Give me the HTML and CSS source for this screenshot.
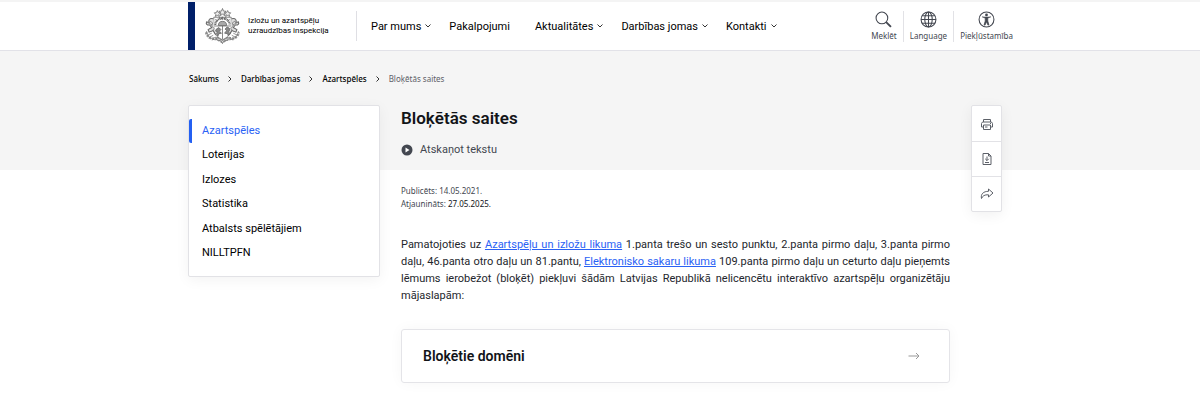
FILE: index.html
```html
<!DOCTYPE html>
<html lang="lv">
<head>
<meta charset="utf-8">
<meta name="viewport" content="width=device-width, initial-scale=1">
<title>Bloķētās saites</title>
<link rel="stylesheet" href="styles.css">
</head>
<body>
<svg class="sprite" aria-hidden="true">
  <symbol id="down" viewBox="0 0 6 6"><path d="M.5 1.5 3 4 5.500 1.500" fill="none" stroke="currentColor"/></symbol>
  <symbol id="right" viewBox="0 0 6 6"><path d="M1.500.5 4 3 1.500 5.500" fill="none" stroke="currentColor"/></symbol>
</svg>
<header class="header">
  <div class="container header-row">
    <a class="logo" href="#">
      <svg class="emblem" viewBox="0 0 68 70" aria-hidden="true" fill="none" stroke="#666" stroke-width="1.500">
        <g fill="#eee">
          <path d="m34 1 2 5 5 .4-4 3.400 1.400 5L34 12l-4.400 2.800 1.400-5-4-3.400 5-.4z"/>
          <path d="m24 5 2 4 4 .4-3 3 1 4-4-2-4 2 1-4-3-3 4-.4zM44 5l2 4 4 .4-3 3 1 4-4-2-4 2 1-4-3-3 4-.4z"/>
        </g>
        <path d="M17 18h34v24c0 10-8 15-17 20-9-5-17-10-17-20z" fill="#fff"/>
        <path d="M17 35h34M34 35v26"/>
        <path d="M20 33a14 13 0 0 1 28 0" stroke-width="4" stroke-dasharray="2 1"/>
        <path d="M26 34a8 8 0 0 1 16 0z" fill="#aaa"/>
        <path d="m20 22 5 4M28 18l2 5m10-5-2 5m10-1-5 4M34 17v6"/>
        <path d="m22 41 5-3 4 4-3 3 4 4-5 1-2 5-3-5 2-4-4-1zM47 39l-4-2-4 4 3 3-4 5 6 1 1 4 4-5-3-4 3-2z" fill="#888"/>
        <path d="M16 21c-7-2-10 2-8 7l-5-1c-2 4 1 7 6 6l4 5-7 4 2 5 8-3 5 8M52 21c7-2 10 2 8 7l5-1c2 4-1 7-6 6l-4 5 7 4-2 5-8-3-5 8" stroke-width="2" fill="#ddd"/>
        <path d="m9 25 6 4-2 6 5 5-5 5m46-20-6 4 2 6-5 5 5 5M6 29l8 4m48-4-8 4" stroke="#777"/>
        <path d="M2 47c2 9 9 14 18 12l14 7 14-7c9 2 16-3 18-12" stroke="#999" stroke-width="5" stroke-dasharray="4 2"/>
        <path d="M3 45c1 10 8 16 18 17m44-17c-1 10-8 16-18 17M5 53l8-4m-6 9 9-5m-2 10 6-7m43-3-8-4m6 9-9-5m2 10-6-7" stroke="#777"/>
        <path d="m23 57 11 6 11-6v5l-8 2-3 5-3-5-8-2z" fill="#ddd"/>
      </svg>
      <span class="logo-text">Izložu un azartspēļu<br>uzraudzības inspekcija</span>
    </a>
    <nav class="nav" aria-label="Galvenā izvēlne">
      <a href="#">Par mums<svg class="chevron"><use href="#down"/></svg></a>
      <a class="plain" href="#">Pakalpojumi</a>
      <a href="#">Aktualitātes<svg class="chevron"><use href="#down"/></svg></a>
      <a href="#">Darbības jomas<svg class="chevron"><use href="#down"/></svg></a>
      <a href="#">Kontakti<svg class="chevron"><use href="#down"/></svg></a>
    </nav>
    <div class="actions">
      <button type="button"><svg viewBox="0 0 16 16"><circle cx="6.500" cy="6.500" r="5.500"/><path d="m10.500 10.500 4.500 4.500" stroke-width="1.800"/></svg>Meklēt</button>
      <button type="button"><svg viewBox="0 0 16 16"><circle cx="8" cy="8" r="7"/><ellipse cx="8" cy="8" rx="3.500" ry="7"/><path d="M8 1v14M1 8h14M2 4.500h12M2 11.500h12"/></svg>Language</button>
      <button type="button"><svg viewBox="0 0 16 16"><circle cx="8" cy="8" r="7"/><circle cx="8" cy="3.700" r="1.300" fill="currentColor" stroke="none"/><path d="M3.800 5.500 6.800 6.500v3L5.700 13l.9.3L8 10l1.400 3.300.9-.3-1.100-3.500v-3l3-1" fill="currentColor" stroke-width=".7"/></svg>Piekļūstamība</button>
    </div>
  </div>
</header>
<main class="page">
  <div class="container">
    <nav class="crumbs" aria-label="Atrašanās vieta">
      <a href="#">Sākums</a><svg class="chevron"><use href="#right"/></svg>
      <a href="#">Darbības jomas</a><svg class="chevron"><use href="#right"/></svg>
      <a href="#">Azartspēles</a><svg class="chevron"><use href="#right"/></svg>
      <span>Bloķētās saites</span>
    </nav>
    <div class="columns">
      <nav class="side" aria-label="Sadaļas">
        <a class="active" href="#">Azartspēles</a>
        <a href="#">Loterijas</a>
        <a href="#">Izlozes</a>
        <a href="#">Statistika</a>
        <a href="#">Atbalsts spēlētājiem</a>
        <a href="#">NILLTPFN</a>
      </nav>
      <article class="article">
        <h1>Bloķētās saites</h1>
        <button class="listen" type="button"><svg viewBox="0 0 12 12" aria-hidden="true"><circle cx="6" cy="6" r="5.500" fill="currentColor"/><path d="M4.500 3.500v5L8.500 6z" fill="#fff"/></svg>Atskaņot tekstu</button>
        <div class="dates">Publicēts: 14.05.2021.<br>Atjaunināts: <span>27.05.2025.</span></div>
        <p class="text">Pamatojoties uz <a href="#">Azartspēļu un izložu likuma</a> 1.panta trešo un sesto punktu, 2.panta pirmo daļu, 3.panta pirmo daļu, 46.panta otro daļu un 81.pantu, <a href="#">Elektronisko sakaru likuma</a> 109.panta pirmo daļu un ceturto daļu pieņemts lēmums ierobežot (bloķēt) piekļuvi šādām Latvijas Republikā nelicencētu interaktīvo azartspēļu organizētāju mājaslapām:</p>
        <a class="card" href="#">Bloķētie domēni<svg viewBox="0 0 12 8" aria-hidden="true"><path d="M.5 4h10.500M8 1l3 3-3 3" fill="none" stroke="currentColor"/></svg></a>
      </article>
      <div class="tools">
        <button type="button" aria-label="Drukāt"><svg viewBox="0 0 14 14"><path d="M3.500 5V2.500h7V5M3.500 10H1.500V6.500l1-1.500h9l1 1.500V10h-2M3.500 8h7v4.500h-7zM5 10h2.500M10 6.500h1"/></svg></button>
        <button type="button" aria-label="Lejupielādēt"><svg viewBox="0 0 14 14"><path d="M3 1.500h5.500L11 4v8.500H3zM8.500 1.500V4H11M7 4.500v4M5.200 6.800 7 8.600l1.800-1.800M5 10.500h4"/></svg></button>
        <button type="button" aria-label="Dalīties"><svg viewBox="0 0 14 14"><path d="M8.500 2 13 6l-4.500 4V7.800C4.500 7.500 2.500 9 1.500 11.500.5 7 3.500 4.300 8.500 4.300z"/></svg></button>
      </div>
    </div>
  </div>
</main>
</body>
</html>
```
FILE: styles.css
```css
* { box-sizing: border-box; }
body {
  margin: 0;
  background: #fff;
  color: #000;
  font: 400 11px/17px Roboto, "Noto Sans", sans-serif;
}
a { color: inherit; text-decoration: none; }
button { border: 0; padding: 0; background: none; color: #434750; font: inherit; cursor: pointer; }
.sprite { position: absolute; width: 0; height: 0; }
.container { max-width: 826px; margin: 0 auto; padding-left: 1px; }
.header { border-top: 2px solid #f4f4f4; border-bottom: 1px solid #e2e2e8; background: #fff; }
.header-row { display: flex; align-items: center; height: 48px; }
.logo {
  display: flex;
  align-items: center;
  align-self: stretch;
  gap: 8px;
  padding-left: 10px;
  border-left: 7px solid #001f69;
}
.emblem { width: 35px; height: 36px; }
.logo-text { width: 108px; font-size: 8px; line-height: 10px; white-space: nowrap; }
.nav {
  display: flex;
  align-items: center;
  gap: 18px;
  height: 30px;
  padding-left: 14px;
  border-left: 1px solid #dfdfe4;
  white-space: nowrap;
}
.nav a { display: flex; align-items: center; gap: 4px; }
.nav .plain { padding-right: 7px; }
.chevron { width: 6px; height: 6px; flex: none; color: #333; }
.actions { display: flex; margin-left: auto; }
.actions button {
  display: flex;
  flex-direction: column;
  align-items: center;
  gap: 2px;
  padding: 0 6px;
  border-left: 1px solid #e2e2e6;
  font-family: "Noto Sans", sans-serif;
  font-size: 8px;
  line-height: 12px;
}
.actions button:first-child { border-left: 0; }
.actions button:last-child { padding-right: 0; }
.actions svg { width: 17px; height: 17px; fill: none; stroke: currentColor; }
.page { background: linear-gradient(#f5f5f5 119px, #fff 119px); }
.crumbs {
  display: flex;
  align-items: center;
  gap: 8px;
  padding: 19px 1px;
  font-family: "Noto Sans", sans-serif;
  font-size: 8px;
  font-weight: 500;
}
.crumbs span { color: #5d6068; font-weight: 400; }
.columns { display: flex; align-items: flex-start; gap: 21px; padding: 0 11px 18px 0; margin-top: -1px; }
.side {
  display: flex;
  flex-direction: column;
  justify-content: space-between;
  flex: 0 0 192px;
  min-height: 172px;
  padding: 13px 0 11px;
  border: 1px solid #e2e2e6;
  border-radius: 2px;
  background: #fff;
  box-shadow: 0 3px 14px rgba(0, 0, 0, .05);
}
.side a { padding: 4px 10px; border-left: 3px solid transparent; line-height: 16px; }
.side .active { color: #2a62f5; border-left-color: #2460f2; border-radius: 2px; }
.article { flex: 1; min-width: 0; color: #121418; }
h1 { margin: 1px 0 10px; font-size: 17px; line-height: 24px; font-weight: 600; }
.listen { display: flex; align-items: center; gap: 7px; line-height: 20px; }
.listen svg { width: 12px; height: 12px; }
.dates { margin-top: 24px; color: #434750; font-family: "Noto Sans", sans-serif; font-size: 8px; line-height: 13px; }
.dates span { color: #121418; }
.text { margin: 26px 0 25px; color: #23262c; text-align: justify; }
.text a { color: #2a62f5; text-decoration: underline; }
.card {
  display: flex;
  justify-content: space-between;
  align-items: center;
  padding: 15px 29px 15px 21px;
  border: 1px solid #e4e4e8;
  border-radius: 3px;
  font-size: 14px;
  line-height: 22px;
  font-weight: 600;
  box-shadow: 0 0 14px rgba(0, 0, 0, .04);
}
.card svg { width: 12px; height: 8px; color: #999; }
.tools {
  flex: 0 0 31px;
  border: 1px solid #e2e2e6;
  border-radius: 2px;
  background: #fff;
  box-shadow: 0 3px 14px rgba(0, 0, 0, .06);
}
.tools button { display: grid; place-items: center; width: 100%; height: 35px; }
.tools button + button { border-top: 1px solid #e2e2e6; }
.tools svg { width: 14px; height: 14px; fill: none; stroke: #5c6068; stroke-width: 1; }
```
